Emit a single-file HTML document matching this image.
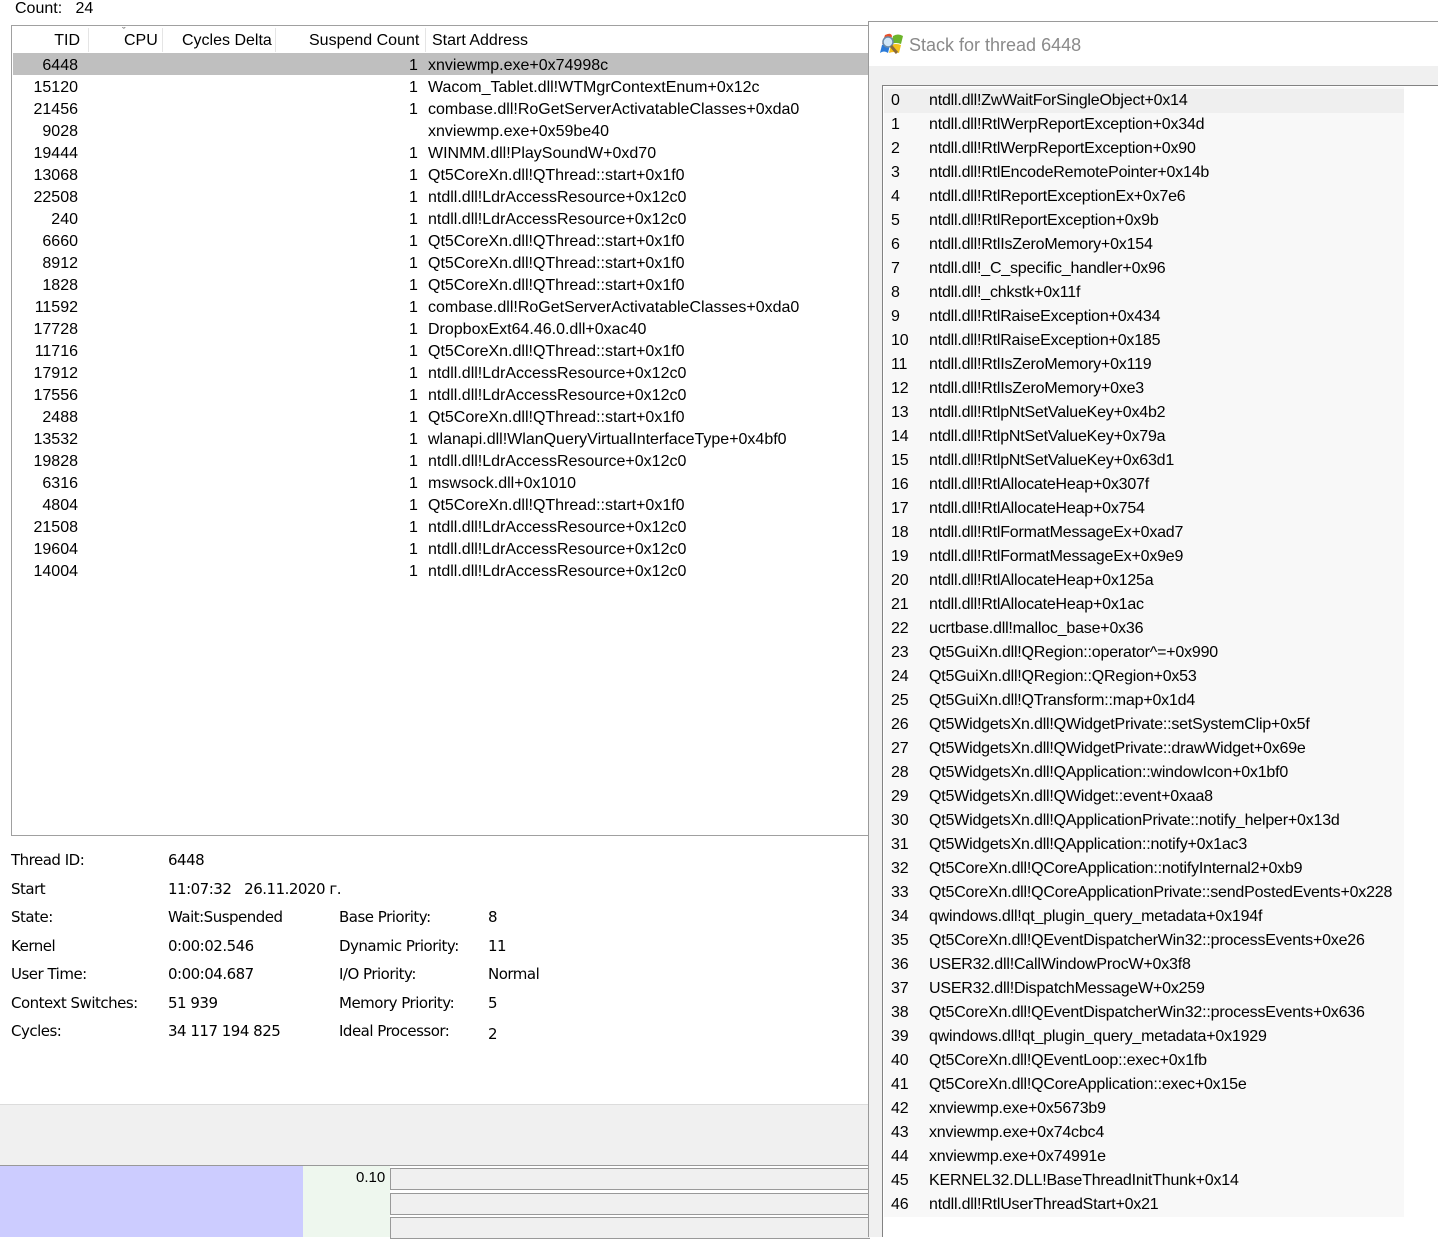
<!DOCTYPE html>
<html><head><meta charset="utf-8"><style>
*{margin:0;padding:0;box-sizing:border-box}
body{width:1438px;height:1237px;overflow:hidden;background:#fff;font-family:"Liberation Sans",Arial,sans-serif;font-size:16px;color:#000;position:relative}
.a{position:absolute;white-space:nowrap}
.row{position:absolute;left:12px;width:856px;height:22px;line-height:22px}
.row .t{position:absolute;right:790px;}
.row .s{position:absolute;left:397px}
.row .d{position:absolute;left:416px}
.sr{position:absolute;left:884px;width:520px;height:24px;line-height:24px;background:#f8f8f8;letter-spacing:-0.2px}
.sr .n{position:absolute;left:7px}
.sr .f{position:absolute;left:45px}
.lb{position:absolute;left:11px}
.v{position:absolute;left:168px}
.lb2{position:absolute;left:339px}
.v2{position:absolute;left:488px}
.dr{position:absolute;left:0;width:600px;height:20px;line-height:20px;font-family:"DejaVu Sans",sans-serif;font-size:15px;letter-spacing:-0.5px}
</style></head><body>
<div class="a" style="left:15px;top:0;line-height:18px">Count:&nbsp;&nbsp;&nbsp;24</div>
<div class="a" style="left:11px;top:25px;width:858px;height:811px;border:1px solid #a0a0a0;background:#fff"></div>
<div class="a" style="left:12px;top:30px;width:856px;height:24px;line-height:22px">
<span class="a" style="right:788px">TID</span>
<span class="a" style="left:76px;top:-2px;width:1px;height:24px;background:#e5e5e5"></span>
<span class="a" style="left:112px;font-size:16px">CPU</span>
<span class="a" style="left:110px;top:-9px;font-size:11px;color:#666">ˇ</span>
<span class="a" style="left:150px;top:-2px;width:1px;height:24px;background:#e5e5e5"></span>
<span class="a" style="left:170px">Cycles Delta</span>
<span class="a" style="left:263px;top:-2px;width:1px;height:24px;background:#e5e5e5"></span>
<span class="a" style="left:297px">Suspend Count</span>
<span class="a" style="left:413px;top:-2px;width:1px;height:24px;background:#e5e5e5"></span>
<span class="a" style="left:420px">Start Address</span>
</div>
<div class="a" style="left:13px;top:53px;width:855px;height:22px;background:#bfbfbf"></div>
<div id="lt"></div>

<div class="dr" style="top:850px"><span class="lb">Thread ID:</span><span class="v">6448</span></div>
<div class="dr" style="top:879px"><span class="lb">Start</span><span class="v">11:07:32&nbsp;&nbsp;&nbsp;26.11.2020 г.</span></div>
<div class="dr" style="top:907px"><span class="lb">State:</span><span class="v">Wait:Suspended</span><span class="lb2">Base Priority:</span><span class="v2">8</span></div>
<div class="dr" style="top:936px"><span class="lb">Kernel</span><span class="v">0:00:02.546</span><span class="lb2">Dynamic Priority:</span><span class="v2">11</span></div>
<div class="dr" style="top:964px"><span class="lb">User Time:</span><span class="v">0:00:04.687</span><span class="lb2">I/O Priority:</span><span class="v2">Normal</span></div>
<div class="dr" style="top:993px"><span class="lb">Context Switches:</span><span class="v">51 939</span><span class="lb2">Memory Priority:</span><span class="v2">5</span></div>
<div class="dr" style="top:1021px"><span class="lb">Cycles:</span><span class="v">34 117 194 825</span><span class="lb2">Ideal Processor:</span><span class="v2" style="top:3px">2</span></div>

<div class="a" style="left:0;top:1104px;width:870px;height:62px;background:#f0f0f0;border-top:1px solid #dcdcdc;border-bottom:1px solid #999"></div>
<div class="a" style="left:0;top:1166px;width:303px;height:71px;background:#ccccff"></div>
<div class="a" style="left:303px;top:1166px;width:87px;height:71px;background:#eef7ee"></div>
<div class="a" style="left:356px;top:1168px;font-size:15px;line-height:20px">0.10</div>
<div class="a" style="left:390px;top:1168px;width:480px;height:22px;background:#f0f0f0;border:1px solid #999;border-right:none"></div>
<div class="a" style="left:390px;top:1193px;width:480px;height:22px;background:#f0f0f0;border:1px solid #999;border-right:none"></div>
<div class="a" style="left:390px;top:1217px;width:480px;height:22px;background:#f0f0f0;border:1px solid #999;border-right:none"></div>

<div class="a" style="left:868px;top:21px;width:570px;height:1216px;background:#f0f0f0;border-left:1px solid #9a9a9a;border-top:1px solid #9a9a9a"></div>
<div class="a" style="left:869px;top:22px;width:569px;height:44px;background:#fff"></div>
<svg class="a" style="left:879px;top:32px" width="26" height="24" viewBox="0 0 26 24"><path d="M6 3 Q12 0 13 4 L11 12 Q6 9 3 12 Z" fill="#e8502a"/><path d="M14 4 Q19 1 24 4 L22 12 Q17 10 12 12 Z" fill="#6cb42a"/><path d="M3 13 Q7 10 11 13 L9 21 Q5 18 1 21 Z" fill="#2a7ad8"/><path d="M12 13 Q17 11 22 13 L20 21 Q15 19 10 21 Z" fill="#f5c21a"/><circle cx="9" cy="10" r="5" fill="#cfe6f7" stroke="#6a8aa8" stroke-width="1.5"/><path d="M12 14 L18 21" stroke="#8a6a3a" stroke-width="3"/></svg>
<div class="a" style="left:909px;top:34px;font-size:18px;color:#8a8a8a;line-height:22px">Stack for thread 6448</div>
<div class="a" style="left:882px;top:85px;width:556px;height:1152px;background:#fff;border:1px solid #828282;border-right:none;border-bottom:none"></div>
<div class="a" style="left:884px;top:87px;width:520px;height:1130px;background:#f8f8f8"></div>
<div id="st"></div>
<script>
var L=[["6448","1","xnviewmp.exe+0x74998c"],["15120","1","Wacom_Tablet.dll!WTMgrContextEnum+0x12c"],["21456","1","combase.dll!RoGetServerActivatableClasses+0xda0"],["9028","","xnviewmp.exe+0x59be40"],["19444","1","WINMM.dll!PlaySoundW+0xd70"],["13068","1","Qt5CoreXn.dll!QThread::start+0x1f0"],["22508","1","ntdll.dll!LdrAccessResource+0x12c0"],["240","1","ntdll.dll!LdrAccessResource+0x12c0"],["6660","1","Qt5CoreXn.dll!QThread::start+0x1f0"],["8912","1","Qt5CoreXn.dll!QThread::start+0x1f0"],["1828","1","Qt5CoreXn.dll!QThread::start+0x1f0"],["11592","1","combase.dll!RoGetServerActivatableClasses+0xda0"],["17728","1","DropboxExt64.46.0.dll+0xac40"],["11716","1","Qt5CoreXn.dll!QThread::start+0x1f0"],["17912","1","ntdll.dll!LdrAccessResource+0x12c0"],["17556","1","ntdll.dll!LdrAccessResource+0x12c0"],["2488","1","Qt5CoreXn.dll!QThread::start+0x1f0"],["13532","1","wlanapi.dll!WlanQueryVirtualInterfaceType+0x4bf0"],["19828","1","ntdll.dll!LdrAccessResource+0x12c0"],["6316","1","mswsock.dll+0x1010"],["4804","1","Qt5CoreXn.dll!QThread::start+0x1f0"],["21508","1","ntdll.dll!LdrAccessResource+0x12c0"],["19604","1","ntdll.dll!LdrAccessResource+0x12c0"],["14004","1","ntdll.dll!LdrAccessResource+0x12c0"]];
var g="";for(var j=0;j<L.length;j++){g+='<div class="row" style="top:'+(55+j*22)+'px"><span class="t">'+L[j][0]+'</span><span class="s">'+L[j][1]+'</span><span class="d">'+L[j][2]+'</span></div>';}
document.getElementById("lt").innerHTML=g;
var f=["ntdll.dll!ZwWaitForSingleObject+0x14","ntdll.dll!RtlWerpReportException+0x34d","ntdll.dll!RtlWerpReportException+0x90","ntdll.dll!RtlEncodeRemotePointer+0x14b","ntdll.dll!RtlReportExceptionEx+0x7e6","ntdll.dll!RtlReportException+0x9b","ntdll.dll!RtlIsZeroMemory+0x154","ntdll.dll!_C_specific_handler+0x96","ntdll.dll!_chkstk+0x11f","ntdll.dll!RtlRaiseException+0x434","ntdll.dll!RtlRaiseException+0x185","ntdll.dll!RtlIsZeroMemory+0x119","ntdll.dll!RtlIsZeroMemory+0xe3","ntdll.dll!RtlpNtSetValueKey+0x4b2","ntdll.dll!RtlpNtSetValueKey+0x79a","ntdll.dll!RtlpNtSetValueKey+0x63d1","ntdll.dll!RtlAllocateHeap+0x307f","ntdll.dll!RtlAllocateHeap+0x754","ntdll.dll!RtlFormatMessageEx+0xad7","ntdll.dll!RtlFormatMessageEx+0x9e9","ntdll.dll!RtlAllocateHeap+0x125a","ntdll.dll!RtlAllocateHeap+0x1ac","ucrtbase.dll!malloc_base+0x36","Qt5GuiXn.dll!QRegion::operator^=+0x990","Qt5GuiXn.dll!QRegion::QRegion+0x53","Qt5GuiXn.dll!QTransform::map+0x1d4","Qt5WidgetsXn.dll!QWidgetPrivate::setSystemClip+0x5f","Qt5WidgetsXn.dll!QWidgetPrivate::drawWidget+0x69e","Qt5WidgetsXn.dll!QApplication::windowIcon+0x1bf0","Qt5WidgetsXn.dll!QWidget::event+0xaa8","Qt5WidgetsXn.dll!QApplicationPrivate::notify_helper+0x13d","Qt5WidgetsXn.dll!QApplication::notify+0x1ac3","Qt5CoreXn.dll!QCoreApplication::notifyInternal2+0xb9","Qt5CoreXn.dll!QCoreApplicationPrivate::sendPostedEvents+0x228","qwindows.dll!qt_plugin_query_metadata+0x194f","Qt5CoreXn.dll!QEventDispatcherWin32::processEvents+0xe26","USER32.dll!CallWindowProcW+0x3f8","USER32.dll!DispatchMessageW+0x259","Qt5CoreXn.dll!QEventDispatcherWin32::processEvents+0x636","qwindows.dll!qt_plugin_query_metadata+0x1929","Qt5CoreXn.dll!QEventLoop::exec+0x1fb","Qt5CoreXn.dll!QCoreApplication::exec+0x15e","xnviewmp.exe+0x5673b9","xnviewmp.exe+0x74cbc4","xnviewmp.exe+0x74991e","KERNEL32.DLL!BaseThreadInitThunk+0x14","ntdll.dll!RtlUserThreadStart+0x21"];
var h="";for(var i=0;i<f.length;i++){h+='<div class="sr" style="top:'+(89+i*24)+'px;'+(i==0?'background:#efefef':'')+'"><span class="n">'+i+'</span><span class="f">'+f[i]+'</span></div>';}
document.getElementById("st").innerHTML=h;
</script>
</body></html>
